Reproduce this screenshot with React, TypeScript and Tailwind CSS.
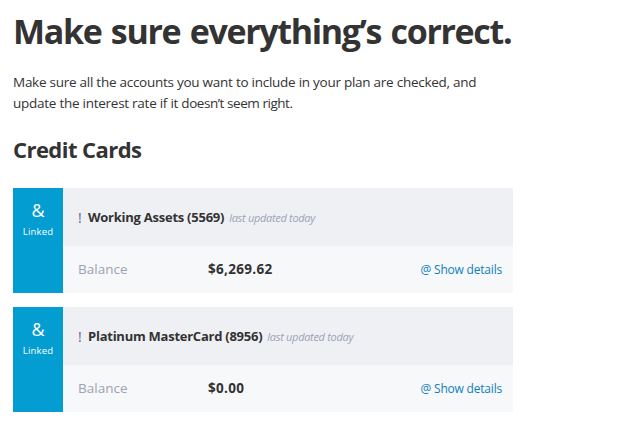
import React from 'react';

interface Account {
  name: string;
  balance: string;
}

const accounts: Account[] = [
  { name: 'Working Assets (5569)', balance: '$6,269.62' },
  { name: 'Platinum MasterCard (8956)', balance: '$0.00' },
];

const AccountCard: React.FC<Account> = ({ name, balance }) => {
  return (
    <article className="flex h-[105px] w-[500px] whitespace-nowrap">
      <div className="flex w-[50px] flex-col items-center bg-[#039dd1] pt-[10px] text-white">
        <span className="text-[18px] leading-6">&amp;</span>
        <span className="mt-[2px] text-[9.5px] leading-4 tracking-[0.2px]">Linked</span>
      </div>
      <div className="flex-1">
        <div className="flex h-[58px] items-center bg-[#eff0f4] pl-[15px]">
          <span className="w-[10px] text-[14px] text-[#5f6680]">!</span>
          <h3 className="pt-[1px] text-[13px] font-bold tracking-[-0.25px]">{name}</h3>
          <em className="ml-[5px] pt-[2px] text-[11px] tracking-[-0.3px] text-[#9ca3b4]">last updated today</em>
        </div>
        <div className="flex h-[47px] items-center bg-[#f7f8fa] pr-[11px] pl-[15px]">
          <span className="w-[130px] text-[13.5px] text-[#9ca3b4]">Balance</span>
          <span className="text-[13.5px] font-bold tracking-[0.3px]">{balance}</span>
          <a href="#" className="ml-auto text-[12px] tracking-[-0.2px] text-[#0d7fbd]">@ Show details</a>
        </div>
      </div>
    </article>
  );
};

export default function App() {
  return (
    <main className="h-[423px] overflow-hidden bg-white pl-[13px] font-['Open_Sans','Noto_Sans',sans-serif] text-[#333]">
      <h1 className="pt-[6px] text-[34px] leading-[50px] font-bold tracking-[-1.35px] whitespace-nowrap [word-spacing:2px]">Make sure everything’s correct.</h1>
      <p className="mt-[16px] text-[13.5px] leading-[21px] tracking-[-0.26px] whitespace-nowrap">
        Make sure all the accounts you want to include in your plan are checked, and
        <br />
        update the interest rate if it <span className="tracking-[-0.45px]">doesn’t seem right.</span>
      </p>
      <h2 className="mt-[19px] text-[22px] leading-[32px] font-bold tracking-[-0.55px]">Credit Cards</h2>
      <section className="mt-[23px] flex flex-col gap-[14px]">
        {accounts.map((account) => (
          <AccountCard key={account.name} {...account} />
        ))}
      </section>
    </main>
  );
}
